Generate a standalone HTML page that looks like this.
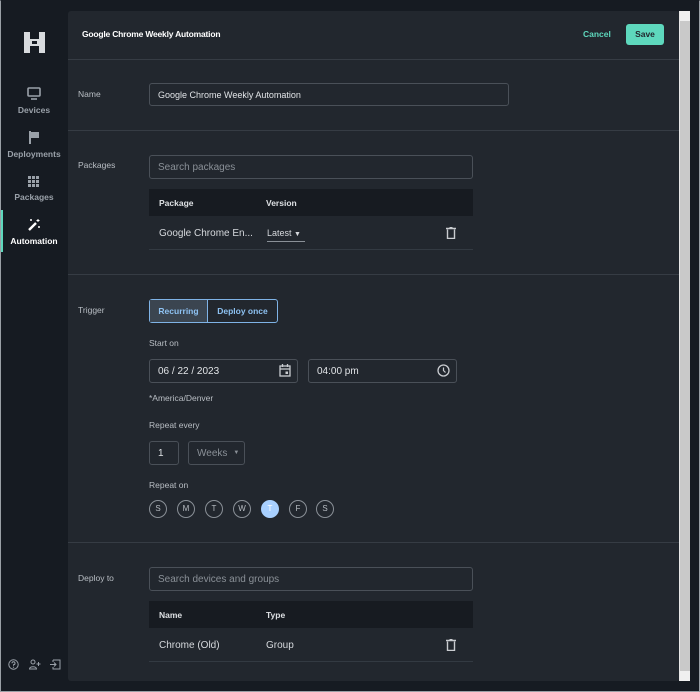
<!DOCTYPE html><html><head><style>
*{box-sizing:border-box;margin:0;padding:0}
body{width:700px;height:692px;background:#161b22;font-family:"Liberation Sans",sans-serif;position:relative;overflow:hidden;color:#d6d9dd;font-size:10px}
.frame{position:absolute;left:0;top:0;width:700px;height:692px;border:1px solid #9aa0a6;border-top-color:#161b22;pointer-events:none}
.side{position:absolute;left:0;top:0;width:68px;height:692px}
.nav{position:absolute;left:0;width:68px;text-align:center;font-size:8.5px;font-weight:bold;color:#9aa1a9}
.panel{position:absolute;left:68px;top:11px;width:612px;height:670px;background:#22272e;border-radius:3px}
.sb{position:absolute;left:679px;top:11px;width:11px;height:670px;background:#c9c9c9;border-left:1px solid #e8e8e8}
.abs{position:absolute}
.lbl{position:absolute;left:10px;font-size:8.5px;color:#b9bec4}
.hr{position:absolute;left:0;width:612px;height:1px;background:#363c44}
.inp{position:absolute;border:1px solid #4a5058;border-radius:3px;font-size:10px;padding-left:8px;display:flex;align-items:center}
.th{position:absolute;background:#171b21;font-size:8.5px;font-weight:bold;color:#dde0e3}
.day{position:absolute;width:18px;height:18px;border:1px solid #8a9097;border-radius:50%;font-size:8px;text-align:center;line-height:16px;color:#b9bec4}
</style></head><body>
<div class="side">
<svg class="abs" style="left:24px;top:32px" width="21" height="21" viewBox="0 0 21 21"><path fill="#d8dbde" d="M0 0h6v7h9V0h6v21h-6v-7H6v7H0z"/><path fill="#161b22" d="M8 9h5v3H8z"/></svg>
<svg class="abs" style="left:27px;top:87px" width="14" height="13" viewBox="0 0 14 13"><rect x="1" y="1" width="12" height="8" rx="1" fill="none" stroke="#9aa1a9" stroke-width="1.6"/><path d="M4 12h6" stroke="#9aa1a9" stroke-width="1.6"/></svg>
<div class="nav" style="top:105px">Devices</div>
<svg class="abs" style="left:29px;top:131px" width="11" height="13" viewBox="0 0 11 13"><path d="M1 0v13" stroke="#9aa1a9" stroke-width="2"/><path d="M2 1h8v6H2z" fill="#9aa1a9"/></svg>
<div class="nav" style="top:149px">Deployments</div>
<svg class="abs" style="left:28px;top:176px" width="11" height="11"><g fill="#9aa1a9"><rect x="0" y="0" width="3" height="3"/><rect x="4" y="0" width="3" height="3"/><rect x="8" y="0" width="3" height="3"/><rect x="0" y="4" width="3" height="3"/><rect x="4" y="4" width="3" height="3"/><rect x="8" y="4" width="3" height="3"/><rect x="0" y="8" width="3" height="3"/><rect x="4" y="8" width="3" height="3"/><rect x="8" y="8" width="3" height="3"/></g></svg>
<div class="nav" style="top:192px">Packages</div>
<div class="abs" style="left:1px;top:210px;width:2px;height:42px;background:#5ed8bd"></div>
<svg class="abs" style="left:27px;top:218px" width="14" height="14" viewBox="0 0 14 14"><path d="M2 12L9 5" stroke="#fff" stroke-width="2.4"/><path d="M11 1v3M9.5 2.5h3M4 1v2M3 2h2M12 8v2M11 9h2" stroke="#fff" stroke-width="1"/></svg>
<div class="nav" style="top:236px;color:#fff">Automation</div>
<svg class="abs" style="left:8px;top:659px" width="11" height="11" viewBox="0 0 11 11"><circle cx="5.5" cy="5.5" r="4.7" fill="none" stroke="#9aa1a9"/><path d="M4 4.3a1.5 1.5 0 1 1 1.5 1.5v1" fill="none" stroke="#9aa1a9"/><circle cx="5.5" cy="8.2" r=".6" fill="#9aa1a9"/></svg>
<svg class="abs" style="left:29px;top:659px" width="12" height="11" viewBox="0 0 12 11"><circle cx="4" cy="3" r="2" fill="none" stroke="#9aa1a9"/><path d="M0.5 10c0-3 7-3 7 0z" fill="none" stroke="#9aa1a9"/><path d="M9.5 3v4M7.5 5h4" stroke="#9aa1a9"/></svg>
<svg class="abs" style="left:50px;top:659px" width="11" height="11" viewBox="0 0 11 11"><path d="M3 1h7v9H3V8M3 3V1" fill="none" stroke="#9aa1a9"/><path d="M0 5.5h6M4 3.5l2 2-2 2" fill="none" stroke="#9aa1a9"/></svg>
</div>
<div class="panel">
<div class="abs" style="left:14px;top:18px;font-size:8.5px;font-weight:bold;color:#fff;letter-spacing:-0.2px">Google Chrome Weekly Automation</div>
<div class="abs" style="left:515px;top:18px;font-size:8.5px;font-weight:bold;color:#5ed8bd">Cancel</div>
<div class="abs" style="left:558px;top:13px;width:38px;height:21px;background:#5ed8bd;border-radius:3px;font-size:8.5px;font-weight:bold;color:#22272e;text-align:center;line-height:21px">Save</div>
<div class="hr" style="top:48px"></div>
<div class="lbl" style="top:78px">Name</div>
<div class="inp" style="left:81px;top:72px;width:360px;height:23px;color:#e1e4e7;font-size:9px">Google Chrome Weekly Automation</div>
<div class="hr" style="top:119px"></div>
<div class="lbl" style="top:149px">Packages</div>
<div class="inp" style="left:81px;top:144px;width:324px;height:24px;color:#8a9097">Search packages</div>
<div class="th" style="left:81px;top:178px;width:324px;height:27px"><span class="abs" style="left:10px;top:9px">Package</span><span class="abs" style="left:117px;top:9px">Version</span></div>
<div class="abs" style="left:91px;top:217px;font-size:10px;color:#d6d9dd">Google Chrome En...</div>
<div class="abs" style="left:199px;top:217px;font-size:9px;color:#d6d9dd;border-bottom:1px solid #8a9097;width:38px;height:14px">Latest <span style="font-size:7px">▼</span></div>
<svg class="abs" style="left:378px;top:216px" width="10" height="12" viewBox="0 0 10 12"><path d="M0 1.5h10M3.5 0h3M1.5 2.5v9h7v-9" fill="none" stroke="#c9ccd0" stroke-width="1.4"/></svg>
<div class="abs" style="left:81px;top:238px;width:324px;height:1px;background:#333a42"></div>
<div class="hr" style="top:263px"></div>
<div class="lbl" style="top:294px">Trigger</div>
<div class="abs" style="left:81px;top:288px;width:129px;height:24px;border:1px solid #7fb3e6;border-radius:3px;display:flex;font-size:8.5px;font-weight:bold;color:#8ec2f2">
<div style="width:58px;background:#3b4550;text-align:center;line-height:22px;border-right:1px solid #7fb3e6">Recurring</div><div style="flex:1;text-align:center;line-height:22px">Deploy once</div></div>
<div class="abs" style="left:81px;top:327px;font-size:8.5px;color:#b9bec4">Start on</div>
<div class="inp" style="left:81px;top:348px;width:149px;height:24px;color:#e1e4e7">06 / 22 / 2023</div>
<svg class="abs" style="left:211px;top:353px" width="12" height="13" viewBox="0 0 12 13"><rect x="1" y="2" width="10" height="10" fill="none" stroke="#c9ccd0" stroke-width="1.3"/><path d="M1 5h10M3.5 0v3M8.5 0v3" stroke="#c9ccd0" stroke-width="1.3"/><rect x="6.5" y="7.5" width="2.5" height="2.5" fill="#c9ccd0"/></svg>
<div class="inp" style="left:240px;top:348px;width:149px;height:24px;color:#e1e4e7">04:00 pm</div>
<svg class="abs" style="left:369px;top:353px" width="13" height="13" viewBox="0 0 13 13"><circle cx="6.5" cy="6.5" r="5.5" fill="none" stroke="#c9ccd0" stroke-width="1.3"/><path d="M6.5 3.5v3l2 2" fill="none" stroke="#c9ccd0" stroke-width="1.2"/></svg>
<div class="abs" style="left:81px;top:382px;font-size:8.5px;color:#b9bec4">*America/Denver</div>
<div class="abs" style="left:81px;top:409px;font-size:8.5px;color:#b9bec4">Repeat every</div>
<div class="inp" style="left:81px;top:430px;width:30px;height:24px;color:#e1e4e7">1</div>
<div class="inp" style="left:120px;top:430px;width:57px;height:24px;color:#8a9097">Weeks <span style="font-size:6px;margin-left:6px">▼</span></div>
<div class="abs" style="left:81px;top:469px;font-size:8.5px;color:#b9bec4">Repeat on</div>
<div class="day" style="left:81px;top:489px">S</div>
<div class="day" style="left:109px;top:489px">M</div>
<div class="day" style="left:137px;top:489px">T</div>
<div class="day" style="left:165px;top:489px">W</div>
<div class="day" style="left:193px;top:489px;background:#a8d0ff;border-color:#a8d0ff;color:#fff">T</div>
<div class="day" style="left:221px;top:489px">F</div>
<div class="day" style="left:248px;top:489px">S</div>
<div class="hr" style="top:531px"></div>
<div class="lbl" style="top:562px">Deploy to</div>
<div class="inp" style="left:81px;top:556px;width:324px;height:24px;color:#8a9097">Search devices and groups</div>
<div class="th" style="left:81px;top:590px;width:324px;height:27px"><span class="abs" style="left:10px;top:9px">Name</span><span class="abs" style="left:117px;top:9px">Type</span></div>
<div class="abs" style="left:91px;top:629px;font-size:10px">Chrome (Old)</div>
<div class="abs" style="left:198px;top:629px;font-size:10px">Group</div>
<svg class="abs" style="left:378px;top:628px" width="10" height="12" viewBox="0 0 10 12"><path d="M0 1.5h10M3.5 0h3M1.5 2.5v9h7v-9" fill="none" stroke="#c9ccd0" stroke-width="1.4"/></svg>
<div class="abs" style="left:81px;top:650px;width:324px;height:1px;background:#333a42"></div>
</div>
<div class="sb"><div class="abs" style="left:0;top:0;width:10px;height:10px;background:#f0f0f0"></div><div class="abs" style="left:0;bottom:0;width:10px;height:10px;background:#f0f0f0"></div></div>
<div class="frame"></div>
</body></html>
